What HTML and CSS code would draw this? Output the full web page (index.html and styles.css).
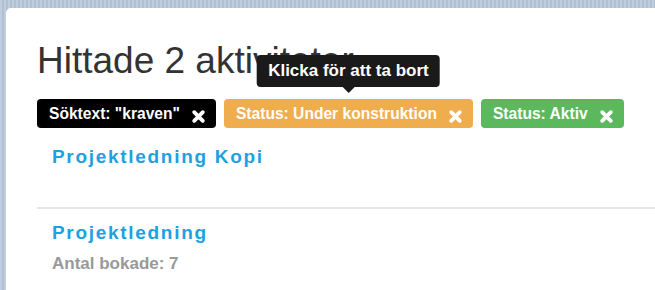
FILE: index.html
```html
<!DOCTYPE html>
<html lang="sv">
<head>
  <meta charset="UTF-8" />
  <meta name="viewport" content="width=device-width, initial-scale=1.0"/>
  <title>Aktiviteter</title>
  <link rel="stylesheet" href="styles.css">
</head>
<body>

  <div class="card">
    <h1>Hittade 2 aktiviteter</h1>

    <div class="filters">
      <span class="label label-dark">Söktext: "kraven"
        <svg class="remove" viewBox="0 0 14 14"><path d="M3 3 L11 11 M11 3 L3 11"/></svg>
      </span>
      <span class="label label-warning">Status: Under konstruktion
        <svg class="remove" viewBox="0 0 14 14"><path d="M3 3 L11 11 M11 3 L3 11"/></svg>
        <span class="tooltip">Klicka för att ta bort</span>
      </span>
      <span class="label label-success">Status: Aktiv
        <svg class="remove" viewBox="0 0 14 14"><path d="M3 3 L11 11 M11 3 L3 11"/></svg>
      </span>
    </div>

    <ul class="activities">
      <li class="activity">
        <a class="activity-title" href="#">Projektledning Kopi</a>
      </li>
      <li class="activity">
        <a class="activity-title" href="#">Projektledning</a>
        <div class="activity-meta">Antal bokade: 7</div>
      </li>
    </ul>
  </div>

</body>
</html>
```

FILE: styles.css
```css
body {
  margin: 0;
  padding: 8px 0 0 6px;
  height: 290px;
  box-sizing: border-box;
  overflow: hidden;
  font-family: 'Liberation Sans', Arial, sans-serif;
  background-color: #b6c6d9;
  background-image: repeating-linear-gradient(90deg, rgba(255,255,255,0.12) 0 2px, rgba(0,0,0,0.03) 2px 4px);
}
.card {
  background-color: #ffffff;
  border-radius: 5px 0 0 0;
  margin-right: -40px;
  height: 100%;
  padding: 33px 31px 0 31px;
}
h1 {
  margin: 0;
  font-size: 37px;
  line-height: 40px;
  font-weight: normal;
  color: #333333;
}
.filters {
  display: flex;
  gap: 8px;
  margin-top: 18px;
}
.label {
  position: relative;
  display: inline-flex;
  align-items: center;
  padding: 6px 10px 6px 12px;
  font-size: 15.6px;
  line-height: 17px;
  font-weight: bold;
  color: #ffffff;
  border-radius: 4px;
}
.label-dark {
  background-color: #000000;
}
.label-warning {
  background-color: #f0ad4e;
}
.label-success {
  background-color: #5cb85c;
}
.remove {
  width: 15px;
  height: 15px;
  margin-left: 11px;
  position: relative;
  top: 3px;
  fill: none;
  stroke: #ffffff;
  stroke-width: 3.6;
  stroke-linecap: round;
}
.tooltip {
  position: absolute;
  bottom: calc(100% + 12px);
  left: 50%;
  transform: translateX(-50%);
  white-space: nowrap;
  background-color: #1a1a1a;
  color: #ffffff;
  font-size: 17px;
  line-height: 20px;
  padding: 6px 11px;
  border-radius: 4px;
}
.tooltip::after {
  content: "";
  position: absolute;
  top: 100%;
  left: 50%;
  margin-left: -6px;
  border-top: 6px solid #1a1a1a;
  border-left: 6px solid transparent;
  border-right: 6px solid transparent;
}
.activities {
  list-style: none;
  margin: 18px 0 0;
  padding: 0;
}
.activity {
  padding: 0 15px;
}
.activity + .activity {
  border-top: 2px solid #e6e6e6;
  margin-top: 39px;
  padding-top: 13px;
}
.activity-title {
  display: block;
  font-size: 19px;
  line-height: 22px;
  font-weight: bold;
  letter-spacing: 1.7px;
  color: #1da1e2;
  text-decoration: none;
}
.activity-meta {
  margin-top: 10px;
  font-size: 17px;
  line-height: 20px;
  font-weight: bold;
  color: #999999;
}
```
